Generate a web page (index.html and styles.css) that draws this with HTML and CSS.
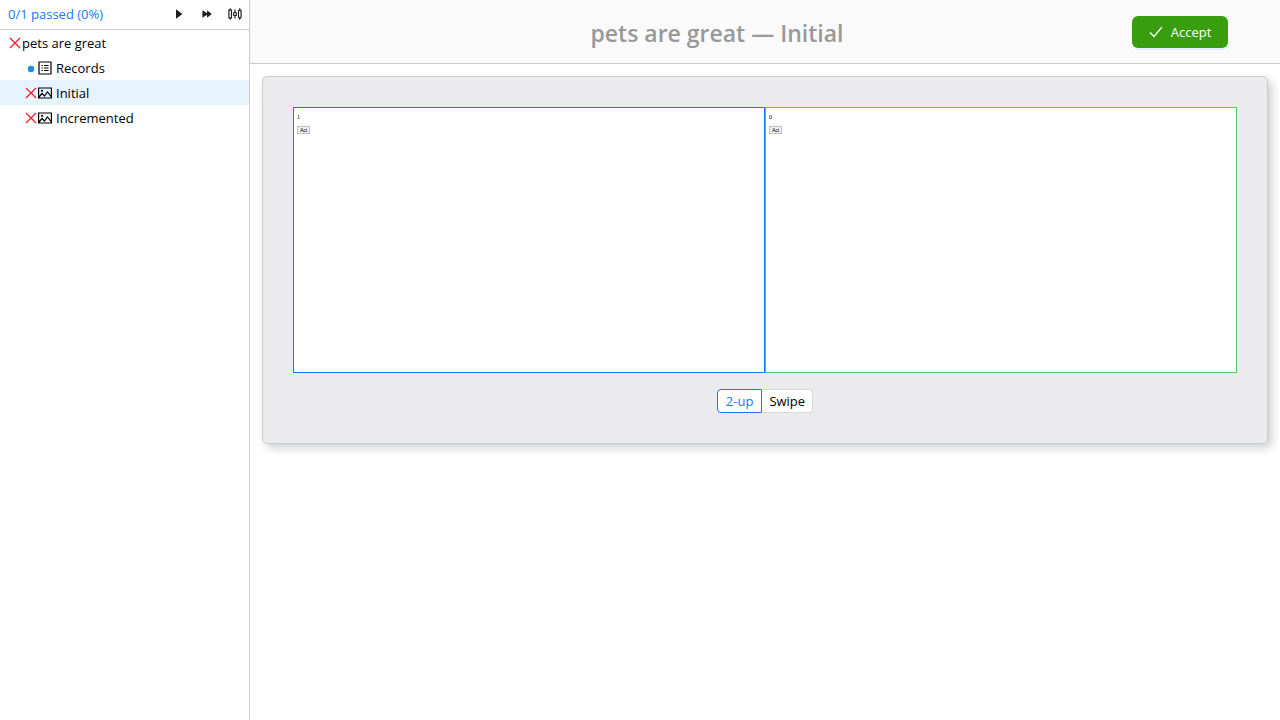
FILE: index.html
```html
<!DOCTYPE html>
<html lang="en">
<head>
<meta charset="utf-8">
<title>pets are great — Initial</title>
<link rel="stylesheet" href="styles.css">
</head>
<body>
<svg class="defs" aria-hidden="true">
  <symbol id="cross" viewBox="0 0 14 14"><path d="M2 2 12 12M12 2 2 12" fill="none" stroke="#f5222d" stroke-width="1.4"/></symbol>
  <symbol id="picture" viewBox="0 0 14 14"><path d="M.6 2h12.8v10H.6zM1 11 4 7.5 6.5 10 9.5 6 13 10.5" fill="none" stroke="currentColor" stroke-width="1.2"/><circle cx="4" cy="4.8" r="1.1" fill="currentColor"/></symbol>
</svg>
<div class="app">
  <aside class="sidebar">
    <div class="toolbar">
      <a class="status" href="#">0/1 passed (0%)</a>
      <button class="tool" type="button" aria-label="Run"><svg viewBox="0 0 14 14"><path d="M4 2.2v9.6L10.4 7z" fill="currentColor"/></svg></button>
      <button class="tool" type="button" aria-label="Run all"><svg viewBox="0 0 14 14"><path d="M2.4 3.2v7.6L7 7.7v3.1L11.8 7 7 3.2v3.1z" fill="currentColor"/></svg></button>
      <button class="tool" type="button" aria-label="Settings"><svg viewBox="0 0 14 14"><g fill="none" stroke="currentColor" stroke-width="1.2"><path d="M2.2 1.2v2M2.2 10.8v2M7 2.5v2.8M7 8.7v2.8M11.8 1.2v2M11.8 10.8v2"/><rect x=".9" y="2.8" width="2.6" height="8.4" rx=".6"/><rect x="5.7" y="5.5" width="2.6" height="3" rx=".6"/><rect x="10.5" y="3.4" width="2.6" height="7.2" rx=".6"/></g></svg></button>
    </div>
    <nav class="tree">
      <a class="row" href="#"><svg class="icon"><use href="#cross"/></svg><span>pets are great</span></a>
      <a class="row child" href="#"><svg class="icon" viewBox="0 0 14 14"><circle cx="7" cy="8" r="3.2" fill="#1890ee"/></svg><svg class="icon" viewBox="0 0 14 14"><path d="M1 1h12v12H1z" fill="none" stroke="currentColor" stroke-width="1.2"/><path d="M3.5 4.5h1.4M6 4.5h4.5M3.5 7h1.4M6 7h4.5M3.5 9.5h1.4M6 9.5h4.5" stroke="currentColor"/></svg><span class="label">Records</span></a>
      <a class="row child selected" href="#"><svg class="icon"><use href="#cross"/></svg><svg class="icon"><use href="#picture"/></svg><span class="label">Initial</span></a>
      <a class="row child" href="#"><svg class="icon"><use href="#cross"/></svg><svg class="icon"><use href="#picture"/></svg><span class="label">Incremented</span></a>
    </nav>
  </aside>
  <div class="content">
    <header class="header">
      <h1 class="title">pets are great — Initial</h1>
      <button class="accept" type="button"><svg class="icon" viewBox="0 0 14 14"><path d="M1 7.5 5 11.5 13 2" fill="none" stroke="currentColor" stroke-width="1.2"/></svg>Accept</button>
    </header>
    <main class="panel">
      <div class="compare">
        <section class="shot before"><p class="count">1</p><button class="act" type="button">Act</button></section>
        <section class="shot after"><p class="count">0</p><button class="act" type="button">Act</button></section>
      </div>
      <div class="modes">
        <button class="mode active" type="button">2-up</button>
        <button class="mode" type="button">Swipe</button>
      </div>
    </main>
  </div>
</div>
</body>
</html>
```
FILE: styles.css
```css
* { box-sizing: border-box; }
body {
  margin: 0;
  font: 13px/22px "Open Sans", "Noto Sans", sans-serif;
  color: #000;
  background: #fff;
}
button { font: inherit; cursor: pointer; }
a { color: inherit; text-decoration: none; }
.defs { position: absolute; width: 0; height: 0; }
.app { display: flex; min-height: 100vh; }
.sidebar { flex: none; width: 250px; border-right: 1px solid #ccc; }
.toolbar {
  display: flex;
  align-items: center;
  height: 30px;
  padding: 0 0 1px 8px;
  border-bottom: 1px solid #ccc;
}
.status { flex: 1; color: #1677ff; }
.tool {
  display: flex;
  justify-content: center;
  width: 28px;
  padding: 0;
  border: 0;
  background: none;
  color: #1f1f1f;
}
.tool svg, .icon { flex: none; width: 14px; height: 14px; }
.row { display: flex; align-items: center; height: 25px; padding-left: 8px; }
.child { padding-left: 24px; }
.label { margin-left: 4px; }
.selected { background: #e6f4ff; }
.content { flex: 1; min-width: 0; }
.header {
  display: flex;
  align-items: center;
  height: 64px;
  padding: 0 52px;
  background: #fafafa;
  border-bottom: 1px solid #ccc;
}
.title {
  flex: 1;
  margin: 0;
  padding-top: 2px;
  text-align: center;
  font-size: 23px;
  font-weight: 600;
  line-height: 32px;
  color: #999;
}
.accept {
  display: flex;
  align-items: center;
  justify-content: center;
  gap: 8px;
  width: 96px;
  height: 32px;
  padding: 0;
  border: 0;
  border-radius: 6px;
  background: #389e0d;
  color: #fff;
  box-shadow: 0 2px 0 #e6f0ff;
}
.panel {
  margin: 12px;
  padding: 30px;
  border: 1px solid #ccc;
  border-radius: 5px;
  background: #ebebed;
  box-shadow: 4px 4px 10px rgba(0, 21, 41, 0.2);
}
.compare { display: grid; grid-template-columns: 1fr 1fr; }
.shot {
  aspect-ratio: 472 / 266;
  padding: 6px 3px;
  border: 1px solid;
  background: #fff;
}
.before { border-color: #1677ff; }
.after { border-color: #5cc15f; }
.count { margin: 0 0 6px; font: 6px/6px "Liberation Serif", serif; }
.act {
  display: block;
  width: 13px;
  height: 8px;
  padding: 0;
  border: 1px solid #c0c0c0;
  background: #efefef;
  font: 5px/6px "Liberation Sans", sans-serif;
}
.modes { display: flex; justify-content: center; margin-top: 16px; }
.mode {
  height: 24px;
  padding: 0 7px;
  border: 1px solid #d9d9d9;
  border-left: 0;
  border-radius: 0 4px 4px 0;
  background: #fff;
}
.mode.active {
  padding: 0 8px;
  border: 1px solid #1677ff;
  border-radius: 4px 0 0 4px;
  color: #1677ff;
}
```
